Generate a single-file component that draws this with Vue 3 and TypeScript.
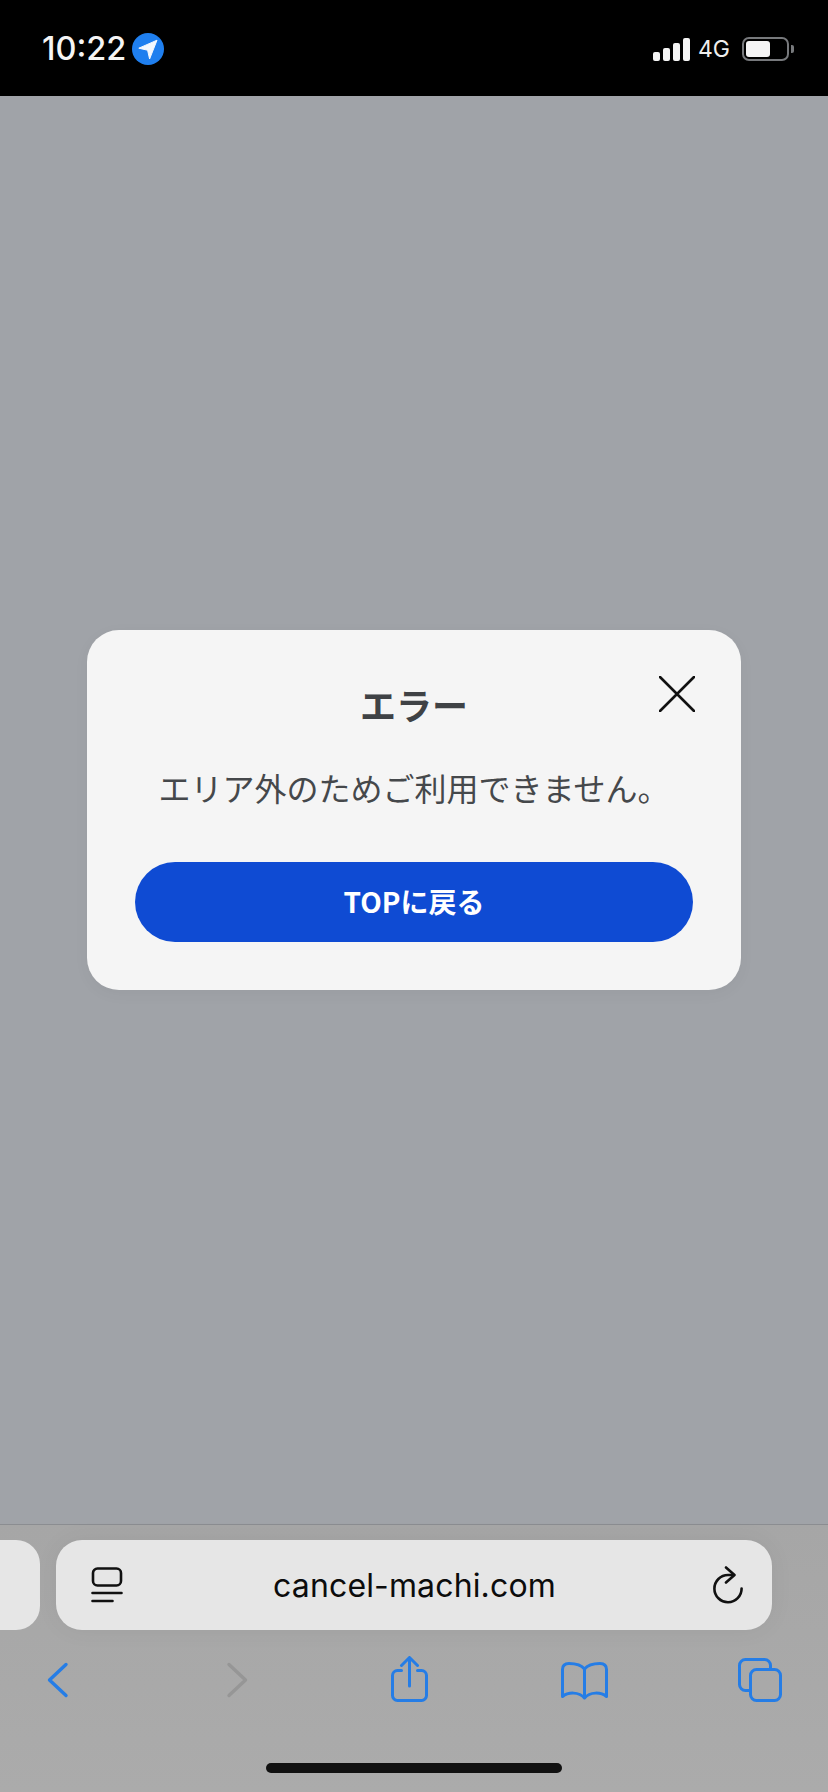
<script setup lang="ts">
const title: string = 'エラー'
const message: string = 'エリア外のためご利用できません。'
const action: string = 'TOPに戻る'
const url: string = 'cancel-machi.com'
</script>

<template>
  <div class="screen">
    <header class="status">
      <div class="status-left">
        <span class="time">10:22</span>
        <svg class="loc" width="32" height="32" viewBox="0 0 32 32">
          <circle cx="16" cy="16" r="16" fill="#1f7fef" />
          <path d="M6.8 15.2 25 7.2 17.6 26 15.6 17.2Z" fill="#f4f8fe" stroke="#f4f8fe" stroke-width="1" stroke-linejoin="round" />
        </svg>
      </div>
      <div class="status-right">
        <div class="bars">
          <i class="bar b1"></i><i class="bar b2"></i><i class="bar b3"></i><i class="bar b4"></i>
        </div>
        <span class="net">4G</span>
        <div class="battery"><div class="level"></div></div>
        <div class="nub"></div>
      </div>
    </header>

    <main class="page">
      <section class="modal">
        <button class="close" aria-label="close">
          <svg width="36" height="36" viewBox="0 0 36 36">
            <path d="M1 1 35 35M35 1 1 35" stroke="#111" stroke-width="2.6" stroke-linecap="round" fill="none" />
          </svg>
        </button>
        <h1 class="title">{{ title }}</h1>
        <p class="message">{{ message }}</p>
        <button class="action">{{ action }}</button>
      </section>
    </main>

    <footer class="toolbar">
      <div class="tabs-row">
        <div class="stub"></div>
        <div class="pill">
          <svg width="32" height="36" viewBox="0 0 32 36" fill="none" stroke="#111" stroke-width="2.6" stroke-linecap="round">
            <rect x="2" y="1.5" width="28" height="17" rx="4.5" />
            <path d="M1.5 26H30.5M1.5 34H21.5" />
          </svg>
          <span class="url">{{ url }}</span>
          <svg width="32" height="38" viewBox="0 0 32 38" fill="none" stroke="#111" stroke-width="2.6" stroke-linecap="round" stroke-linejoin="round">
            <path d="M29.6 22.5A13.6 13.6 0 1 1 16 9H21" />
            <path d="M14 1.5 22.5 9 14 16.5" />
          </svg>
        </div>
      </div>
      <nav class="icons">
        <button class="ico">
          <svg width="60" height="48" viewBox="0 0 60 48" fill="none" stroke="#257de6" stroke-width="3.4" stroke-linecap="round" stroke-linejoin="round">
            <path d="M37 8.5 20.5 24 37 39.5" />
          </svg>
        </button>
        <button class="ico">
          <svg width="60" height="48" viewBox="0 0 60 48" fill="none" stroke="#969696" stroke-width="3.4" stroke-linecap="round" stroke-linejoin="round">
            <path d="M19 8.5 35.5 24 19 39.5" />
          </svg>
        </button>
        <button class="ico">
          <svg width="60" height="48" viewBox="0 0 60 48" fill="none" stroke="#257de6" stroke-width="3" stroke-linecap="round" stroke-linejoin="round">
            <path d="M20.5 14.5H16.5A5 5 0 0 0 11.5 19.5V39.5A5 5 0 0 0 16.5 44.5H40.5A5 5 0 0 0 45.5 39.5V19.5A5 5 0 0 0 40.5 14.5H36.5" />
            <path d="M28.5 30V2M20.5 9.5 28.5 1.5 36.5 9.5" />
          </svg>
        </button>
        <button class="ico">
          <svg width="60" height="48" viewBox="0 0 60 48" fill="none" stroke="#257de6" stroke-width="3" stroke-linecap="round" stroke-linejoin="round">
            <path d="M27.5 13C24 8.5 18 7.5 12 7.5 8 7.5 5.5 9.5 5.5 13.5V40.5C11 36 22 35.5 27.5 42 33 35.5 44 36 49.5 40.5V13.5C49.5 9.5 47 7.5 43 7.5 37 7.5 31 8.5 27.5 13ZM27.5 13V41" />
          </svg>
        </button>
        <button class="ico">
          <svg width="60" height="48" viewBox="0 0 60 48" fill="none" stroke="#257de6" stroke-width="3" stroke-linejoin="round">
            <path d="M18.5 34.5H13.5A6 6 0 0 1 7.5 28.5V9.5A6 6 0 0 1 13.5 3.5H32.5A6 6 0 0 1 38.5 9.5V13.5" />
            <rect x="18.5" y="13.5" width="30" height="31" rx="6" />
          </svg>
        </button>
      </nav>
      <div class="home"></div>
    </footer>
  </div>
</template>

<style>
html, body { margin: 0; background: #000; }
</style>

<style scoped>
.screen {
  width: 828px;
  height: 1792px;
  display: flex;
  flex-direction: column;
  overflow: hidden;
  font-family: "Inter", "Liberation Sans", "Noto Sans CJK JP", sans-serif;
}
.status {
  height: 96px;
  flex: none;
  background: #000;
  color: #f5f5f5;
  display: flex;
  align-items: center;
  justify-content: space-between;
  padding: 2px 34px 0 42px;
  box-sizing: border-box;
}
.status-left { display: flex; align-items: center; gap: 6px; }
.time { font-size: 32.5px; font-weight: 500; line-height: 32px; }
.status-right { display: flex; align-items: center; }
.bars { display: flex; align-items: flex-end; gap: 3px; height: 24px; }
.bar { display: block; width: 7px; background: #f5f5f5; border-radius: 2px; }
.b1 { height: 9px; }
.b2 { height: 13px; }
.b3 { height: 18px; }
.b4 { height: 23px; }
.net { font-size: 23px; line-height: 24px; margin: 0 12px 0 8px; color: #eee; font-weight: 400; }
.battery {
  width: 47px;
  height: 24px;
  box-sizing: border-box;
  border: 2px solid #77797c;
  border-radius: 7px;
  padding: 2px;
}
.level { width: 24px; height: 16px; background: #f5f5f5; border-radius: 3px; }
.nub { width: 3px; height: 8px; margin-left: 2px; background: #77797c; border-radius: 0 2px 2px 0; }

.page {
  flex: 1;
  background: #a0a3a8;
  display: flex;
  align-items: center;
  justify-content: center;
}
.modal {
  position: relative;
  width: 654px;
  box-sizing: border-box;
  padding: 47px 48px 48px;
  background: #f5f5f5;
  border-radius: 32px;
  box-shadow: 0 4px 16px rgba(0, 0, 0, 0.04);
  color: #3f4245;
  font-family: "Noto Sans CJK JP", sans-serif;
  text-align: center;
}
.close {
  position: absolute;
  top: 46px;
  right: 46px;
  width: 36px;
  height: 36px;
  padding: 0;
  border: 0;
  background: none;
  line-height: 0;
}
.title { margin: 0; font-size: 36px; line-height: 54px; font-weight: 700; }
.message { margin: 32px 0 0; font-size: 32px; line-height: 48px; font-weight: 400; white-space: nowrap; color: #45484b; }
.action {
  display: block;
  width: 558px;
  height: 80px;
  margin: 51px 0 0;
  padding: 0 0 2px;
  border: 0;
  border-radius: 40px;
  background: #0f4bd3;
  color: #fff;
  font-family: inherit;
  font-size: 28px;
  font-weight: 700;
}

.toolbar {
  height: 268px;
  flex: none;
  box-sizing: border-box;
  border-top: 1px solid #8b8d91;
  background: linear-gradient(#a6a6a6, #ababab);
  display: flex;
  flex-direction: column;
}
.tabs-row { display: flex; gap: 16px; margin-top: 15px; height: 90px; }
.stub { width: 40px; background: #e6e6e6; border-radius: 0 24px 24px 0; }
.pill {
  width: 716px;
  box-sizing: border-box;
  padding: 0 28px 0 35px;
  background: #e6e6e6;
  border-radius: 26px;
  display: flex;
  align-items: center;
  justify-content: space-between;
  box-shadow: 0 0 24px rgba(0, 0, 0, 0.05);
}
.url {
  margin-right: 6px;
  font-size: 32px;
  letter-spacing: 0.14px;
  color: #0c0c0c;
  font-family: "Inter", "Liberation Sans", sans-serif;
}
.icons {
  display: grid;
  grid-template-columns: 181px 171px 176px 175px 60px;
  padding-left: 29px;
  margin-top: 26px;
}
.ico { width: 60px; height: 48px; padding: 0; border: 0; background: none; line-height: 0; }
.home {
  width: 296px;
  height: 10px;
  margin: 59px auto 0;
  border-radius: 5px;
  background: #111;
}
</style>
